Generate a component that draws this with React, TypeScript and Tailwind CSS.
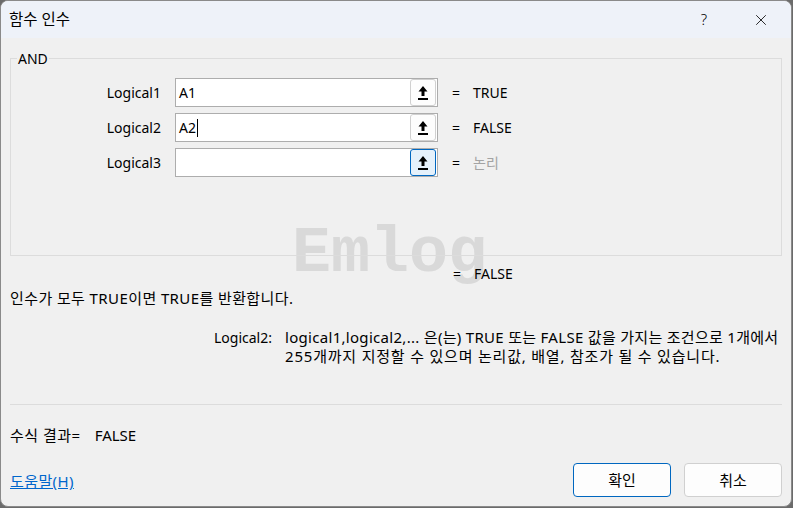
import React from 'react';
import { X } from 'lucide-react';

type Arg = {
  label: string;
  value: string;
  result: string;
  placeholder?: boolean;
  focused?: boolean;
  caret?: boolean;
};

const args: Arg[] = [
  { label: 'Logical1', value: 'A1', result: 'TRUE' },
  { label: 'Logical2', value: 'A2', result: 'FALSE', caret: true },
  { label: 'Logical3', value: '', result: '논리', placeholder: true, focused: true },
];

// collapse-dialog button glyph: filled up arrow over a bar
const CollapseIcon = () => (
  <svg width="10" height="16" viewBox="0 0 10 16" fill="#000">
    <path d="M5 1 L9.5 6.5 L6.5 6.5 L6.5 11 L3.5 11 L3.5 6.5 L0.5 6.5 Z" />
    <rect x="0" y="13" width="10" height="2" />
  </svg>
);

const ArgRow = ({ arg }: { arg: Arg }) => (
  <div className="flex h-[29px] items-center">
    <div className="w-[151px] pr-[1px] text-right">{arg.label}</div>
    <div className="ml-[13px] flex h-[29px] w-[263px] items-center border border-[#adadad] bg-white pl-[3px] pr-[1px]">
      <div className="flex flex-1 items-center">
        {arg.value}
        {arg.caret && <span className="ml-[1px] inline-block h-[18px] w-[1px] bg-black" />}
      </div>
      <div
        className={
          arg.focused
            ? 'flex h-[27px] w-[26px] items-center justify-center rounded-[3px] border border-[#0067c0] bg-[#e5f1fb]'
            : 'flex h-[27px] w-[26px] items-center justify-center rounded-[3px] border border-[#d0d0d0] bg-[#fdfdfd]'
        }
      >
        <CollapseIcon />
      </div>
    </div>
    <div className="ml-[14px] w-[21px]">=</div>
    <div className={arg.placeholder ? 'text-[#a3a3a3]' : ''}>{arg.result}</div>
  </div>
);

export default function App() {
  return (
    <div className="h-[508px] w-[793px] bg-[#6b6b6b]">
      <div
        className="relative flex h-[507px] w-[792px] flex-col overflow-hidden rounded-[8px] border border-[#8a8a8a] bg-[#f0f0f0] text-[14px] text-black"
        style={{ fontFamily: '"Noto Sans", "Noto Sans CJK KR", sans-serif' }}
      >
        {/* watermark, painted under the dialog content */}
        <div
          className="pointer-events-none absolute left-[291px] top-[221px] text-[65px] font-bold leading-none text-[#d4d4d4] opacity-80 blur-[0.4px]"
          style={{ fontFamily: '"Liberation Mono", monospace' }}
        >
          Emlog
        </div>

        {/* title bar */}
        <div className="relative flex h-[37px] shrink-0 items-center bg-[#eef2f9] pl-[8px]">
          <span className="text-[15.5px]">함수 인수</span>
          <span className="ml-auto mr-[45px] text-[15px] font-light">?</span>
          <X size={18} strokeWidth={1.1} className="mr-[21px]" />
        </div>

        <div className="relative flex flex-1 flex-col px-[9px]">
          <fieldset className="mt-[11px] h-[207px] border border-[#dcdcdc]">
            <legend className="ml-[6px] px-[1px] leading-[19px]">AND</legend>
            <div className="mt-[10px] flex flex-col gap-[6px]">
              {args.map((a) => (
                <ArgRow key={a.label} arg={a} />
              ))}
            </div>
          </fieldset>

          <div className="mt-[8px] flex h-[19px] items-center pl-[443px]">
            <span className="w-[21px]">=</span>
            <span>FALSE</span>
          </div>

          <div className="mt-[6px] text-[15px] leading-[19px] tracking-[0.4px]">
            인수가 모두 TRUE이면 TRUE를 반환합니다.
          </div>

          <div className="mt-[20px] flex leading-[19px]">
            <div className="w-[275px] pl-[204px]">Logical2:</div>
            <div className="text-[15px] tracking-[0.3px]">
              logical1,logical2,... 은(는) TRUE 또는 FALSE 값을 가지는 조건으로 1개에서
              <br />
              <span className="tracking-[0.8px]">255개까지 지정할 수 있으며 논리값, 배열, 참조가 될 수 있습니다.</span>
            </div>
          </div>

          <div className="mt-[38px] h-px bg-[#dcdcdc]" />

          <div className="mt-[21px] flex text-[15px] leading-[19px]">
            <span className="tracking-[0.5px]">수식 결과=</span>
            <span className="ml-[14px]">FALSE</span>
          </div>

          <div className="mt-[18px] flex items-center">
            <a className="mt-[2px] text-[15px] tracking-[0.4px] text-[#0066cc] underline">도움말(H)</a>
            <button className="ml-auto h-[34px] w-[98px] rounded-[4px] border border-[#0067c0] bg-[#fdfdfd] text-[15px]">
              확인
            </button>
            <button className="ml-[13px] h-[34px] w-[98px] rounded-[4px] border border-[#d0d0d0] bg-[#fdfdfd] text-[15px]">
              취소
            </button>
          </div>
        </div>
      </div>
    </div>
  );
}
